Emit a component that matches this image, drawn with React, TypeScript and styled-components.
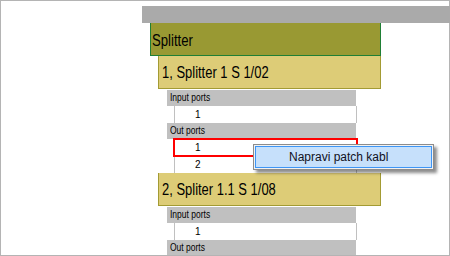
import React from 'react';
import styled, { createGlobalStyle } from 'styled-components';

const GlobalStyle = createGlobalStyle`
  body {
    margin: 0;
    background: #ffffff;
  }
`;

const sans = `"Liberation Sans", Arial, sans-serif`;

const Frame = styled.div`
  position: relative;
  width: 450px;
  height: 256px;
  box-sizing: border-box;
  border: 1px solid #b4b4b4;
  padding: 5px 0 0 141px;
  background: #ffffff;
`;

const TopBar = styled.div`
  height: 17px;
  margin-right: -1px;
  background: #aaaaaa;
`;

const Tree = styled.div`
  height: 232px;
  overflow: hidden;
  padding-left: 8px;
`;

// the original uses a narrow face; squeeze the regular one to the same width
const Narrow = styled.span<{ $sx: number }>`
  display: inline-block;
  white-space: nowrap;
  transform: scaleX(${({ $sx }) => $sx});
  transform-origin: left center;
`;

const GroupHeader = styled.div`
  width: 231px;
  height: 33px;
  box-sizing: border-box;
  border: 1px solid #1f7f35;
  border-top: none;
  background: #999933;
  padding: 9px 0 0 1px;
  font-family: ${sans};
  font-size: 16px;
  line-height: 17px;
  color: #000000;
`;

const Items = styled.div`
  padding-left: 8px;
`;

const ItemHeader = styled.div`
  width: 223px;
  height: 33px;
  box-sizing: border-box;
  border: 1px solid #a39b33;
  border-top: none;
  background: #ddcc77;
  padding: 8px 0 0 3px;
  font-family: ${sans};
  font-size: 16px;
  line-height: 17px;
  color: #000000;
`;

const Ports = styled.div`
  padding-left: 9px;
  padding-top: 1px;
`;

const PortLabel = styled.div`
  width: 189px;
  height: 16px;
  box-sizing: border-box;
  background: #c0c0c0;
  padding: 2px 0 0 3px;
  font-family: ${sans};
  font-size: 10px;
  line-height: 12px;
  color: #000000;
`;

const PortRow = styled.div<{ $selected?: boolean }>`
  width: 183px;
  height: 17px;
  margin-left: 7px;
  box-sizing: border-box;
  border-left: 1px solid #c0c0c0;
  border-right: 1px solid #c0c0c0;
  background: #ffffff;
  padding: 3px 0 0 20px;
  font-family: ${sans};
  font-size: 10px;
  line-height: 12px;
  color: #000000;
  outline: ${({ $selected }) => ($selected ? '2px solid #ff0000' : 'none')};
  outline-offset: -1px;
`;

const ContextMenu = styled.div`
  position: absolute;
  left: 252px;
  top: 143px;
  width: 181px;
  height: 26px;
  box-sizing: border-box;
  border: 1px solid #8c8c8c;
  padding: 1px;
  background: #f2f2f2;
  box-shadow: 3px 3px 3px rgba(0, 0, 0, 0.45);
`;

const MenuItem = styled.div`
  height: 100%;
  box-sizing: border-box;
  border: 1px solid #3d95f5;
  background: #c6e0fb;
  padding-left: 33px;
  display: flex;
  align-items: center;
  font-family: ${sans};
  font-size: 12px;
  color: #111122;
`;

type Splitter = {
  title: string;
  inputs: string[];
  outputs: string[];
  selectedOut?: number;
};

const splitters: Splitter[] = [
  { title: '1, Splitter 1 S 1/02', inputs: ['1'], outputs: ['1', '2'], selectedOut: 0 },
  { title: '2, Spliter 1.1 S 1/08', inputs: ['1'], outputs: [] },
];

const App: React.FC = () => {
  return (
    <>
      <GlobalStyle />
      <Frame>
        <TopBar />
        <Tree>
          <GroupHeader>
            <Narrow $sx={0.82}>Splitter</Narrow>
          </GroupHeader>
          <Items>
            {splitters.map((s) => (
              <div key={s.title}>
                <ItemHeader>
                  <Narrow $sx={0.81}>{s.title}</Narrow>
                </ItemHeader>
                <Ports>
                  <PortLabel>
                    <Narrow $sx={0.85}>Input ports</Narrow>
                  </PortLabel>
                  {s.inputs.map((p) => (
                    <PortRow key={'in' + p}>{p}</PortRow>
                  ))}
                  <PortLabel>
                    <Narrow $sx={0.85}>Out ports</Narrow>
                  </PortLabel>
                  {s.outputs.map((p, i) => (
                    <PortRow key={'out' + p} $selected={s.selectedOut === i}>
                      {p}
                    </PortRow>
                  ))}
                </Ports>
              </div>
            ))}
          </Items>
        </Tree>
        <ContextMenu>
          <MenuItem>Napravi patch kabl</MenuItem>
        </ContextMenu>
      </Frame>
    </>
  );
};

export default App;
